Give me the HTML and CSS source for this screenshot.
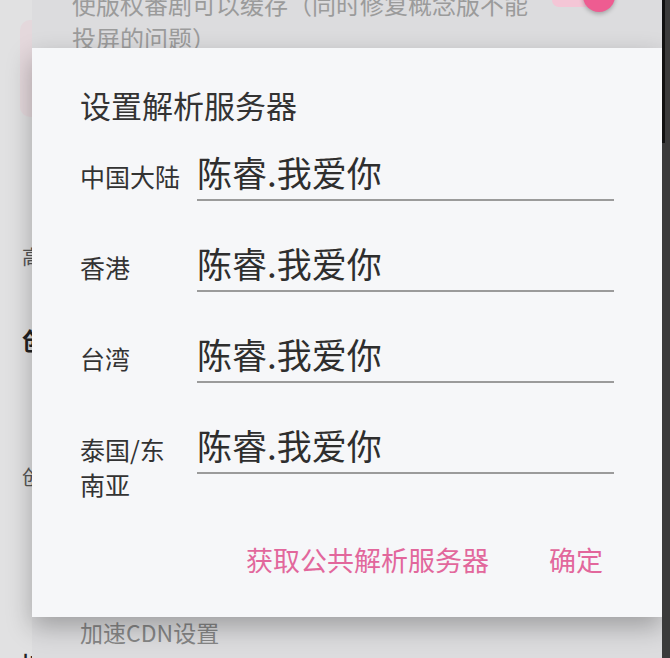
FILE: index.html
```html
<!DOCTYPE html>
<html lang="zh-CN">
<head>
<meta charset="UTF-8">
<meta name="viewport" content="width=device-width, initial-scale=1.0">
<title>设置解析服务器</title>
<link rel="stylesheet" href="styles.css">
</head>
<body>
<div class="screen">
    <!-- franja izquierda: restos de la pantalla de atrás -->
    <div class="rail">
        <div class="rail-card"></div>
        <div class="rail-text first">高级选项</div>
        <div class="rail-head">创作中心</div>
        <div class="rail-text third">创作设置</div>
        <div class="rail-head last">|其他</div>
    </div>

    <div class="content">
        <div class="pref">
            <div class="pref-summary">使版权番剧可以缓存（同时修复概念版不能投屏的问题）</div>
            <div class="switch"></div>
        </div>
        <div class="pref-title">加速CDN设置</div>
    </div>

    <div class="dialog">
        <div class="dialog-title">设置解析服务器</div>
        <div class="server-list">
            <div class="server-row">
                <label class="server-label" for="cn">中国大陆</label>
                <input class="server-input" id="cn" type="text" value="陈睿.我爱你">
            </div>
            <div class="server-row">
                <label class="server-label" for="hk">香港</label>
                <input class="server-input" id="hk" type="text" value="陈睿.我爱你">
            </div>
            <div class="server-row">
                <label class="server-label" for="tw">台湾</label>
                <input class="server-input" id="tw" type="text" value="陈睿.我爱你">
            </div>
            <div class="server-row">
                <label class="server-label" for="th">泰国/东南亚</label>
                <input class="server-input" id="th" type="text" value="陈睿.我爱你">
            </div>
        </div>
        <div class="actions">
            <button class="action">获取公共解析服务器</button>
            <button class="action">确定</button>
        </div>
    </div>
</div>
<div class="edge">
    <div class="edge-thumb"></div>
</div>
</body>
</html>
```

FILE: styles.css
```css
body {
    margin: 0;
    width: 670px;
    height: 658px;
    overflow: hidden;
    display: flex;
    font-family: "Noto Sans CJK SC", "Noto Sans", sans-serif;
    background-color: #3b3b3b;
}
.screen {
    position: relative;
    width: 662px;
    height: 658px;
    display: flex;
    background-color: #dcdcde;
    overflow: hidden;
}
.rail {
    width: 32px;
    flex-shrink: 0;
    display: flex;
    flex-direction: column;
    overflow: hidden;
    background-color: #e1e1e2;
    white-space: nowrap;
}
.rail > div {
    flex-shrink: 0;
}
.rail-card {
    margin: 20px 0 0 20px;
    width: 40px;
    height: 97px;
    border-radius: 10px 0 0 10px;
    background-color: #e4d8dc;
}
.rail-text {
    padding-left: 22px;
    font-size: 20px;
    line-height: 24px;
    color: #555;
}
.rail-text.first {
    margin-top: 128px;
}
.rail-text.third {
    margin-top: 111px;
}
.rail-head {
    margin-top: 57px;
    padding-left: 22px;
    font-size: 24px;
    line-height: 28px;
    font-weight: bold;
    color: #222;
}
.rail-head.last {
    margin-top: 161px;
}
.content {
    flex: 1;
    display: flex;
    flex-direction: column;
}
.pref {
    display: flex;
    align-items: flex-start;
    margin-top: -13px;
    padding-left: 40px;
}
.pref-summary {
    width: 460px;
    font-size: 24px;
    line-height: 34px;
    color: #9b9b9b;
}
.switch {
    position: relative;
    margin: 6px 0 0 20px;
    width: 48px;
    height: 14px;
    border-radius: 7px;
    background-color: #f4c6d6;
}
.switch::after {
    content: "";
    position: absolute;
    left: 31px;
    top: -13px;
    width: 32px;
    height: 32px;
    border-radius: 50%;
    background-color: #ee5c91;
    box-shadow: 0 2px 4px rgba(0, 0, 0, 0.25);
}
.pref-title {
    margin-top: auto;
    margin-bottom: 11px;
    padding-left: 48px;
    font-size: 23px;
    line-height: 30px;
    color: #868686;
}
.dialog {
    position: absolute;
    left: 32px;
    top: 48px;
    width: 630px;
    height: 569px;
    display: flex;
    flex-direction: column;
    background-color: #f6f7f9;
    box-shadow: 0 10px 24px rgba(0, 0, 0, 0.28);
}
.dialog-title {
    padding: 37px 48px 0;
    font-size: 31px;
    line-height: 40px;
    color: #333;
}
.server-list {
    display: flex;
    flex-direction: column;
    gap: 40px;
    margin-top: 25px;
    padding: 0 48px;
}
.server-row {
    display: flex;
    align-items: baseline;
}
.server-label {
    width: 103px;
    flex-shrink: 0;
    margin-right: 14px;
    font-size: 25px;
    line-height: 35px;
    color: #333;
}
.server-input {
    flex: 1;
    min-width: 0;
    box-sizing: border-box;
    height: 51px;
    margin: 0;
    padding: 0 0 7px;
    border: none;
    border-bottom: 2px solid #9b9b9b;
    background: transparent;
    font-family: inherit;
    font-size: 35px;
    color: #2e2e2e;
    outline: none;
}
.actions {
    margin-top: auto;
    display: flex;
    justify-content: flex-end;
    gap: 36px;
    padding: 0 47px 37px;
}
.action {
    padding: 0 12px;
    border: none;
    background: none;
    font-family: inherit;
    font-size: 27px;
    line-height: 40px;
    color: #e2679c;
    cursor: pointer;
}
.edge {
    width: 8px;
    height: 658px;
    background-color: #3b3b3b;
}
.edge-thumb {
    width: 3px;
    height: 143px;
    background-color: #111;
}
```
